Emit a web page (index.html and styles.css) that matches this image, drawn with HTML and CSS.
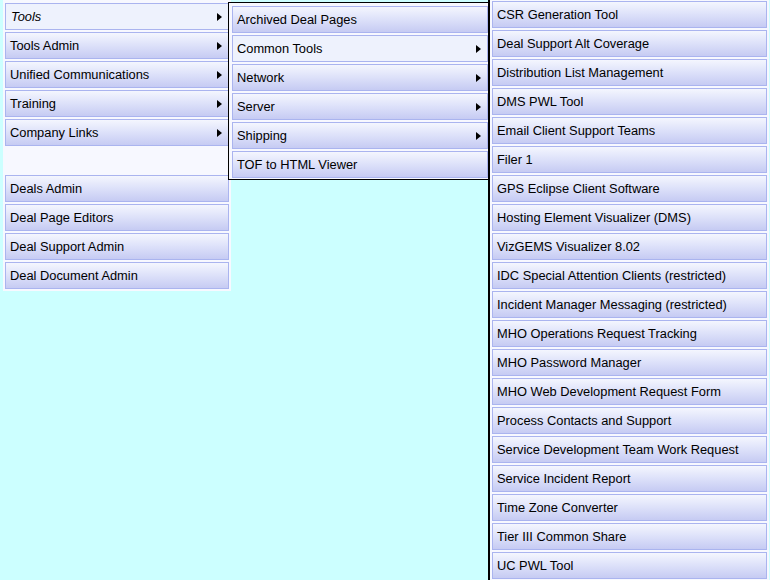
FILE: index.html
```
<!DOCTYPE html>
<html>
<head>
<meta charset="utf-8">
<link rel="stylesheet" href="styles.css">
</head>
<body>
<div class="menubar">
  <ul class="panel main">
    <li class="item active italic has-sub"><span>Tools</span><i class="arrow"></i></li>
    <li class="item has-sub"><span>Tools Admin</span><i class="arrow"></i></li>
    <li class="item has-sub"><span>Unified Communications</span><i class="arrow"></i></li>
    <li class="item has-sub"><span>Training</span><i class="arrow"></i></li>
    <li class="item has-sub"><span>Company Links</span><i class="arrow"></i></li>
    <li class="spacer"></li>
    <li class="item"><span>Deals Admin</span></li>
    <li class="item"><span>Deal Page Editors</span></li>
    <li class="item"><span>Deal Support Admin</span></li>
    <li class="item"><span>Deal Document Admin</span></li>
  </ul>
  <ul class="panel sub">
    <li class="item"><span>Archived Deal Pages</span></li>
    <li class="item active has-sub"><span>Common Tools</span><i class="arrow"></i></li>
    <li class="item has-sub"><span>Network</span><i class="arrow"></i></li>
    <li class="item has-sub"><span>Server</span><i class="arrow"></i></li>
    <li class="item has-sub"><span>Shipping</span><i class="arrow"></i></li>
    <li class="item"><span>TOF to HTML Viewer</span></li>
  </ul>
  <ul class="panel subsub">
    <li class="item"><span>CSR Generation Tool</span></li>
    <li class="item"><span>Deal Support Alt Coverage</span></li>
    <li class="item"><span>Distribution List Management</span></li>
    <li class="item"><span>DMS PWL Tool</span></li>
    <li class="item"><span>Email Client Support Teams</span></li>
    <li class="item"><span>Filer 1</span></li>
    <li class="item"><span>GPS Eclipse Client Software</span></li>
    <li class="item"><span>Hosting Element Visualizer (DMS)</span></li>
    <li class="item"><span>VizGEMS Visualizer 8.02</span></li>
    <li class="item"><span>IDC Special Attention Clients (restricted)</span></li>
    <li class="item"><span>Incident Manager Messaging (restricted)</span></li>
    <li class="item"><span>MHO Operations Request Tracking</span></li>
    <li class="item"><span>MHO Password Manager</span></li>
    <li class="item"><span>MHO Web Development Request Form</span></li>
    <li class="item"><span>Process Contacts and Support</span></li>
    <li class="item"><span>Service Development Team Work Request</span></li>
    <li class="item"><span>Service Incident Report</span></li>
    <li class="item"><span>Time Zone Converter</span></li>
    <li class="item"><span>Tier III Common Share</span></li>
    <li class="item"><span>UC PWL Tool</span></li>
  </ul>
</div>
</body>
</html>
```

FILE: styles.css
```
html, body {
  margin: 0;
  padding: 0;
  height: 100%;
  overflow: hidden;
  background: #ccffff;
  font-family: "Liberation Sans", Arial, sans-serif;
  font-size: 12.85px;
  color: #000;
}

.menubar {
  display: flex;
  align-items: flex-start;
  padding-left: 3px;
}

.panel {
  list-style: none;
  margin: 0;
  background: #f7f8ff;
  display: flex;
  flex-direction: column;
  gap: 2px;
}

.main {
  width: 224px;
  padding: 3px 2px 2px 2px;
}

.sub {
  position: relative;
  z-index: 2;
  margin-left: -3px;
  margin-top: 2px;
  width: 256px;
  border: 1px solid #000;
  padding: 3px 0 1px 3px;
}

.subsub {
  position: relative;
  z-index: 3;
  margin-left: -1px;
  width: 275px;
  height: 600px;
  border-left: 2px solid #000;
  padding: 1px 2px 0 2px;
}

.item {
  box-sizing: border-box;
  height: 27px;
  border: 1px solid #aab4ef;
  background: linear-gradient(to bottom, #f4f6fe 0%, #dfe3fa 45%, #c6cbf3 100%);
  display: flex;
  align-items: center;
  justify-content: space-between;
  padding: 0 6px 0 4px;
  white-space: nowrap;
}

.item.active {
  background: #eef2fd;
}

.italic span {
  font-style: italic;
  padding-left: 1px;
}

.spacer {
  height: 25px;
}

.arrow {
  width: 0;
  height: 0;
  border-left: 5px solid #000;
  border-top: 4px solid transparent;
  border-bottom: 4px solid transparent;
}
```
